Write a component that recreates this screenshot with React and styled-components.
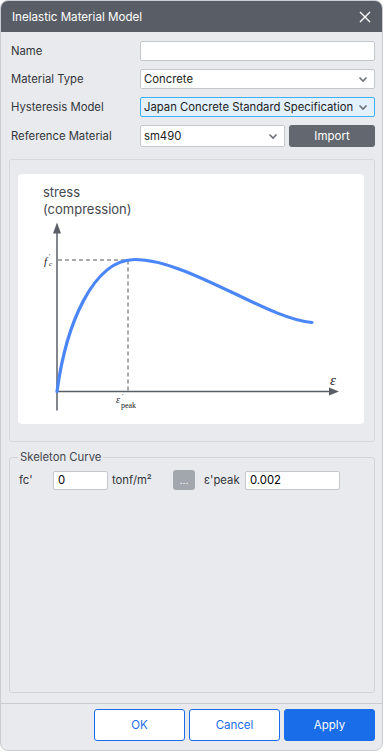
import React from "react";
import styled, { createGlobalStyle } from "styled-components";

const Global = createGlobalStyle`
  html, body { margin: 0; padding: 0; background: #ffffff; }
  body { font-family: Inter, "Noto Sans", sans-serif; }
  * { box-sizing: border-box; }
`;

const Dialog = styled.div`
  width: 383px;
  height: 751px;
  background: #e9eaee;
  border: 1px solid #c9ccd2;
  border-radius: 8px;
  overflow: hidden;
  display: flex;
  flex-direction: column;
`;

const TitleBar = styled.div`
  height: 31px;
  flex: none;
  background: #595e66;
  color: #ffffff;
  display: flex;
  align-items: center;
  justify-content: space-between;
  padding: 0 9px 0 11px;
  font-size: 11.6px;
`;

const CloseBtn = styled.button`
  border: none;
  background: transparent;
  padding: 0;
  width: 16px;
  height: 16px;
  display: flex;
  align-items: center;
  justify-content: center;
  cursor: pointer;
`;

const Body = styled.div`
  display: flex;
  flex-direction: column;
  padding: 9px 7px 0 8px;
`;

const Form = styled.div`
  display: flex;
  flex-direction: column;
  gap: 8px;
  padding: 0 0 0 2px;
`;

const Row = styled.div`
  display: grid;
  grid-template-columns: 129px 1fr;
  align-items: center;
  height: ${(p) => p.$h || 20}px;
`;

const Label = styled.span`
  font-size: 11.3px;
  color: #33363b;
`;

const TextInput = styled.input`
  height: 20px;
  width: 100%;
  border: 1px solid #c4c7cc;
  border-radius: 2px;
  background: #fff;
  font-family: inherit;
  font-size: 11.3px;
  padding: 0 4px;
  outline: none;
`;

const SelectBox = styled.div`
  height: ${(p) => p.$h || 20}px;
  border: 1px solid ${(p) => (p.$focus ? "#3fb0f5" : "#c4c7cc")};
  background: ${(p) => (p.$focus ? "#e3f1fd" : "#ffffff")};
  border-radius: 2px;
  display: flex;
  align-items: center;
  justify-content: space-between;
  padding: 0 5px 0 3px;
  font-size: 11.3px;
  color: #222;
  white-space: nowrap;
  overflow: hidden;
`;

const RefGroup = styled.div`
  display: grid;
  grid-template-columns: 145px 1fr;
  gap: 4px;
  height: 22px;
`;

const GreyButton = styled.button`
  border: none;
  border-radius: 3px;
  background: ${(p) => (p.$light ? "#a2a6ad" : "#636870")};
  color: #ffffff;
  font-family: inherit;
  font-size: ${(p) => (p.$light ? 10.5 : 11.5)}px;
  height: ${(p) => p.$h || 22}px;
  width: ${(p) => (p.$w ? p.$w + "px" : "auto")};
  padding: 0;
`;

const ChartPanel = styled.div`
  margin-top: 12px;
  height: 283px;
  border: 1px solid #d6d8dc;
  border-radius: 3px;
  padding: 14px 10px 17px 8px;
  display: flex;
`;

const ChartCard = styled.div`
  flex: 1;
  background: #ffffff;
  border-radius: 4px;
`;

const Fieldset = styled.fieldset`
  margin: 8px 0 0 0;
  border: 1px solid #d2d4d8;
  border-radius: 3px;
  height: 243px;
  padding: 5px 9px 0 9px;
`;

const Legend = styled.legend`
  font-size: 11.3px;
  color: #44474c;
  padding: 0 2px;
  margin-left: -1px;
`;

const ParamRow = styled.div`
  display: flex;
  align-items: center;
  height: 20px;
  margin-top: 1px;
`;

const ParamLabel = styled.span`
  font-size: 11.3px;
  color: #33363b;
  width: ${(p) => p.$w}px;
  padding-left: ${(p) => p.$pl || 0}px;
  flex: none;
`;

const SmallInput = styled.input`
  width: ${(p) => p.$w}px;
  height: 19px;
  border: 1px solid #c4c7cc;
  border-radius: 2px;
  background: #fff;
  font-family: inherit;
  font-size: 11.3px;
  padding: 0 4px;
  outline: none;
  flex: none;
`;

const Footer = styled.div`
  margin-top: 10px;
  border-top: 1px solid #c9ccd2;
  padding: 5px 7px 0 0;
  display: flex;
  justify-content: flex-end;
  gap: 4px;
`;

const FooterButton = styled.button`
  width: 91px;
  height: 32px;
  border-radius: 3px;
  border: 1px solid #1a6de8;
  background: ${(p) => (p.$primary ? "#1a6de8" : "#ffffff")};
  color: ${(p) => (p.$primary ? "#ffffff" : "#1a6de8")};
  font-family: inherit;
  font-size: 11.5px;
`;

const Chevron = () => (
  <svg width="12" height="12" viewBox="0 0 12 12">
    <path d="M2.5 4.5 L6 8 L9.5 4.5" fill="none" stroke="#6b7078" strokeWidth="1.6" />
  </svg>
);

const Select = ({ value, focus, h }) => (
  <SelectBox $focus={focus} $h={h}>
    <span>{value}</span>
    <Chevron />
  </SelectBox>
);

const Chart = () => (
  <svg width="100%" height="100%" viewBox="0 0 346 249">
    <text x="25" y="22" fontSize="13" fill="#44474c" fontFamily="Inter, sans-serif">stress</text>
    <text x="25" y="39" fontSize="13" fill="#44474c" fontFamily="Inter, sans-serif">(compression)</text>
    <line x1="39" y1="58" x2="39" y2="236" stroke="#5a5e66" strokeWidth="1.5" />
    <polygon points="39,48 35,59 43,59" fill="#5a5e66" />
    <line x1="39" y1="217" x2="313" y2="217" stroke="#5a5e66" strokeWidth="1.5" />
    <polygon points="321,217 311,213 311,221" fill="#5a5e66" />
    <line x1="40" y1="85.5" x2="110" y2="85.5" stroke="#555" strokeWidth="1" strokeDasharray="4 3" />
    <line x1="110" y1="86" x2="110" y2="217" stroke="#555" strokeWidth="1" strokeDasharray="4 3" />
    <path d="M39 217 C48 150 75 85 117 85 C170 85 250 145 294 148" fill="none" stroke="#4a86f7" strokeWidth="3.2" strokeLinecap="round" />
    <text x="26" y="90" fontSize="11" fontStyle="italic" fill="#222" fontFamily="'Liberation Serif', serif">f</text>
    <text x="31" y="83" fontSize="7" fill="#222" fontFamily="'Liberation Serif', serif">′</text>
    <text x="31" y="91" fontSize="7" fontStyle="italic" fill="#222" fontFamily="'Liberation Serif', serif">c</text>
    <text x="312" y="210" fontSize="15" fontStyle="italic" fill="#222" fontFamily="'Liberation Serif', serif">ε</text>
    <text x="98" y="228" fontSize="10" fontStyle="italic" fill="#222" fontFamily="'Liberation Serif', serif">ε</text>
    <text x="104" y="223" fontSize="7" fill="#222" fontFamily="'Liberation Serif', serif">′</text>
    <text x="103" y="233" fontSize="8" fill="#222" fontFamily="'Liberation Serif', serif">peak</text>
  </svg>
);

export default function App() {
  return (
    <>
      <Global />
      <Dialog>
        <TitleBar>
          <span>Inelastic Material Model</span>
          <CloseBtn aria-label="close">
            <svg width="12" height="12" viewBox="0 0 12 12">
              <path d="M1 1 L11 11 M11 1 L1 11" stroke="#fff" strokeWidth="1.4" />
            </svg>
          </CloseBtn>
        </TitleBar>
        <Body>
          <Form>
            <Row>
              <Label>Name</Label>
              <TextInput defaultValue="" />
            </Row>
            <Row>
              <Label>Material Type</Label>
              <Select value="Concrete" />
            </Row>
            <Row>
              <Label>Hysteresis Model</Label>
              <Select value="Japan Concrete Standard Specification" focus />
            </Row>
            <Row $h={22}>
              <Label>Reference Material</Label>
              <RefGroup>
                <Select value="sm490" h={22} />
                <GreyButton>Import</GreyButton>
              </RefGroup>
            </Row>
          </Form>
          <ChartPanel>
            <ChartCard>
              <Chart />
            </ChartCard>
          </ChartPanel>
          <Fieldset>
            <Legend>Skeleton Curve</Legend>
            <ParamRow>
              <ParamLabel $w={34}>fc'</ParamLabel>
              <SmallInput $w={55} defaultValue="0" />
              <ParamLabel $w={65} $pl={4}>tonf/m²</ParamLabel>
              <GreyButton $light $w={22} $h={20}>...</GreyButton>
              <ParamLabel $w={50} $pl={9}>ε'peak</ParamLabel>
              <SmallInput $w={95} defaultValue="0.002" />
            </ParamRow>
          </Fieldset>
        </Body>
        <Footer>
          <FooterButton>OK</FooterButton>
          <FooterButton>Cancel</FooterButton>
          <FooterButton $primary>Apply</FooterButton>
        </Footer>
      </Dialog>
    </>
  );
}
